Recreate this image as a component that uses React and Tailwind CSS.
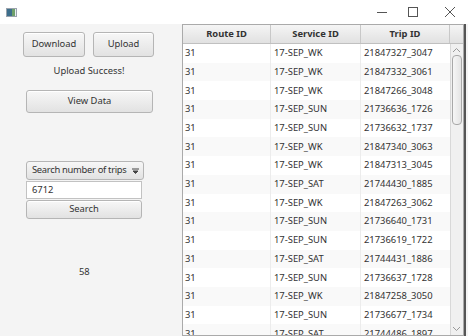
const ROWS = [
  ["31", "17-SEP_WK", "21847327_3047"],
  ["31", "17-SEP_WK", "21847332_3061"],
  ["31", "17-SEP_WK", "21847266_3048"],
  ["31", "17-SEP_SUN", "21736636_1726"],
  ["31", "17-SEP_SUN", "21736632_1737"],
  ["31", "17-SEP_WK", "21847340_3063"],
  ["31", "17-SEP_WK", "21847313_3045"],
  ["31", "17-SEP_SAT", "21744430_1885"],
  ["31", "17-SEP_WK", "21847263_3062"],
  ["31", "17-SEP_SUN", "21736640_1731"],
  ["31", "17-SEP_SUN", "21736619_1722"],
  ["31", "17-SEP_SAT", "21744431_1886"],
  ["31", "17-SEP_SUN", "21736637_1728"],
  ["31", "17-SEP_WK", "21847258_3050"],
  ["31", "17-SEP_SUN", "21736677_1734"],
  ["31", "17-SEP_SAT", "21744486_1897"],
];

const FONT = { fontFamily: '"Segoe UI", "Noto Sans", "Open Sans", sans-serif' };

// JavaFX-ish modena button
function FxButton({ className = "", children }) {
  return (
    <div
      className={`flex items-center justify-center rounded-[3px] border border-[#b5b5b5] bg-gradient-to-b from-[#f7f7f7] to-[#e2e2e2] text-[#333] shadow-[inset_0_1px_0_#fff] ${className}`}
    >
      {children}
    </div>
  );
}

export default function App() {
  return (
    <div className="relative h-[336px] w-[468px] overflow-hidden bg-[#f4f4f4] text-[9.4px]" style={FONT}>
      {/* title bar */}
      <div className="flex h-[24px] items-center bg-white">
        <div className="ml-[6px] flex h-[9px] w-[11px] border border-[#9aa3ad] bg-[#e8eef2]">
          <div className="h-full w-[5px] bg-[#3d6e8c]" />
          <div className="h-full w-[3px] bg-[#6ea06a]" />
        </div>
        <div className="flex-1" />
        <svg width="10" height="10" className="mr-[21px]" viewBox="0 0 10 10">
          <path d="M0 5.5H10" stroke="#555" strokeWidth="1" />
        </svg>
        <svg width="10" height="10" className="mr-[27px]" viewBox="0 0 10 10">
          <rect x="0.5" y="0.5" width="9" height="9" fill="none" stroke="#555" strokeWidth="1" />
        </svg>
        <svg width="10" height="10" className="mr-[13px]" viewBox="0 0 10 10">
          <path d="M0 0L10 10M10 0L0 10" stroke="#555" strokeWidth="1" />
        </svg>
      </div>

      <div className="flex h-[312px]">
        {/* left panel */}
        <div className="relative w-[182px] text-[#333]">
          <div className="mt-[8px] flex gap-[8px] pl-[23px]">
            <FxButton className="h-[25px] w-[62px]">Download</FxButton>
            <FxButton className="h-[25px] w-[61px]">Upload</FxButton>
          </div>
          <div className="mt-[7px] pr-[4px] text-center leading-[14px]">Upload Success!</div>
          <FxButton className="ml-[26px] mt-[12px] h-[23px] w-[127px]">View Data</FxButton>

          <div className="ml-[26px] mt-[48px] w-[118px]">
            <div className="flex h-[19px] items-center justify-between rounded-[3px] border border-[#b5b5b5] bg-gradient-to-b from-[#f7f7f7] to-[#e2e2e2] pl-[5px] pr-[4px]">
              <span className="whitespace-nowrap tracking-[-0.3px]">Search number of trips</span>
              <svg width="7" height="6" viewBox="0 0 7 6">
                <path d="M0 1H7M1 3H6L3.5 5.5Z" stroke="#444" strokeWidth="1" fill="#444" />
              </svg>
            </div>
            <div className="mt-[1px] flex h-[18px] w-[116px] items-center border border-[#c2c2c2] bg-white pl-[5px]">
              6712
            </div>
            <FxButton className="mt-[1px] h-[19px] w-[116px]">Search</FxButton>
          </div>

          <div className="absolute left-[79px] top-[242px] leading-[12px]">58</div>
        </div>

        {/* table */}
        <div className="flex w-[282px] flex-col border border-[#aaa] bg-white text-[#333]">
          <div className="flex h-[19px] border-b border-[#c0c0c0] bg-gradient-to-b from-[#f5f5f5] to-[#e1e1e1] font-bold">
            <div className="flex w-[88px] items-center justify-center border-r border-[#c8c8c8]">Route ID</div>
            <div className="flex w-[90px] items-center justify-center border-r border-[#c8c8c8]">Service ID</div>
            <div className="flex w-[89px] items-center justify-center border-r border-[#c8c8c8]">Trip ID</div>
            <div className="flex-1" />
          </div>
          <div className="flex min-h-0 flex-1">
            <div className="flex-1 overflow-hidden">
              {ROWS.map((r, i) => (
                <div
                  key={i}
                  className={`flex h-[18.7px] shrink-0 items-center ${i % 2 ? "bg-[#f9f9f9]" : "bg-white"}`}
                >
                  <div className="flex h-full w-[88px] items-center border-r border-[#ececec] pl-[2px]">{r[0]}</div>
                  <div className="flex h-full w-[90px] items-center border-r border-[#ececec] pl-[3px]">{r[1]}</div>
                  <div className="flex h-full w-[89px] items-center pl-[3px]">{r[2]}</div>
                </div>
              ))}
            </div>
            {/* scrollbar */}
            <div className="relative w-[13px] border-l border-[#d8d8d8] bg-[#f0f0f0]">
              <svg width="9" height="6" className="absolute left-[1px] top-[3px]" viewBox="0 0 9 6">
                <path d="M1 5L4.5 1.5L8 5" stroke="#999" fill="none" />
              </svg>
              <div className="absolute left-[1px] top-[11px] h-[70px] w-[10px] rounded-[4px] border border-[#a8a8a8] bg-gradient-to-r from-[#f6f6f6] to-[#e4e4e4]" />
              <svg width="9" height="6" className="absolute bottom-[3px] left-[1px]" viewBox="0 0 9 6">
                <path d="M1 1L4.5 4.5L8 1" stroke="#999" fill="none" />
              </svg>
            </div>
          </div>
        </div>
        <div className="w-[2px] bg-[#555]" />
      </div>
    </div>
  );
}
